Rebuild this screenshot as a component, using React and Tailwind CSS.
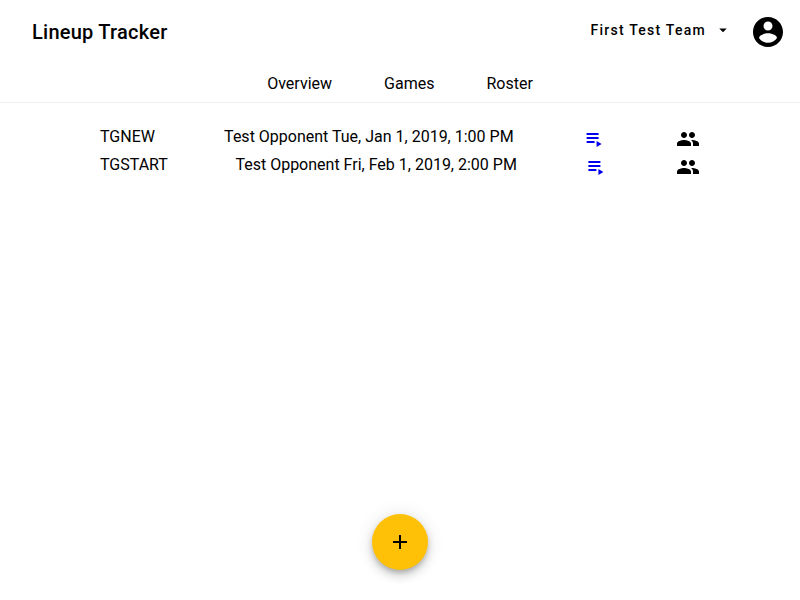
const Icon = ({ d, className, shift = 0 }) => (
  <svg viewBox="0 0 24 24" className={className} fill="currentColor">
    <path d={d} transform={`translate(${shift} 0)`} />
  </svg>
);

const ACCOUNT = "M12 2C6.48 2 2 6.48 2 12s4.48 10 10 10 10-4.48 10-10S17.52 2 12 2zm0 3c1.66 0 3 1.34 3 3s-1.34 3-3 3-3-1.34-3-3 1.34-3 3-3zm0 14.2c-2.5 0-4.71-1.28-6-3.22.03-1.99 4-3.08 6-3.08 1.99 0 5.97 1.09 6 3.08-1.29 1.94-3.5 3.22-6 3.22z";
const PEOPLE = "M16 11c1.66 0 2.99-1.34 2.99-3S17.66 5 16 5c-1.66 0-3 1.34-3 3s1.34 3 3 3zm-8 0c1.66 0 2.99-1.34 2.99-3S9.66 5 8 5C6.34 5 5 6.34 5 8s1.34 3 3 3zm0 2c-2.33 0-7 1.17-7 3.5V19h14v-2.5c0-2.33-4.67-3.5-7-3.5zm8 0c-.29 0-.62.02-.97.05 1.16.84 1.97 1.97 1.97 3.45V19h6v-2.5c0-2.33-4.67-3.5-7-3.5z";
const PLAYLIST = "M4 10h12v2H4zm0-4h12v2H4zm0 8h8v2H4zm10 0v6l5-3z";

const games = [
  { id: "TGNEW", text: "Test Opponent Tue, Jan 1, 2019, 1:00 PM", shift: -0.4 },
  { id: "TGSTART", text: "Test Opponent Fri, Feb 1, 2019, 2:00 PM", shift: 0.4 },
];

export default function App() {
  return (
    <div className="relative h-[600px] w-[800px] overflow-hidden bg-white font-[Roboto,sans-serif] text-base text-black">
      <header className="border-b border-[#eeeeee]">
        <div className="flex h-16 items-center pl-8 pr-3">
          <h1 className="flex-1 text-xl font-medium tracking-[0.25px]">Lineup Tracker</h1>
          <button className="mr-[18px] flex items-center pb-1 text-sm font-medium tracking-[1.25px]">
            First Test Team
            <Icon d="M7 10l5 5 5-5z" className="ml-2 size-[18px]" />
          </button>
          <Icon d={ACCOUNT} className="mr-0.5 size-9" />
        </div>
        <nav className="flex h-[38px] justify-center gap-[52px] pt-2 leading-6">
          <a>Overview</a>
          <a>Games</a>
          <a>Roster</a>
        </nav>
      </header>
      <main className="mx-auto w-[600px] pt-6">
        {games.map((g) => (
          <div key={g.id} className="flex h-7 justify-between leading-5">
            <span>{g.id}</span>
            <span>{g.text}</span>
            <a className="text-[#0000ee]">
              <Icon d={PLAYLIST} shift={g.shift} className="size-6" />
            </a>
            <Icon d={PEOPLE} className="size-6" />
          </div>
        ))}
      </main>
      <button className="absolute bottom-[30px] left-[372px] flex size-14 items-center justify-center rounded-full bg-[#ffc107] shadow-[0_3px_5px_-1px_rgba(0,0,0,0.2),0_6px_10px_0_rgba(0,0,0,0.14),0_1px_18px_0_rgba(0,0,0,0.12)]">
        <Icon d="M19 13h-6v6h-2v-6H5v-2h6V5h2v6h6v2z" className="size-6" />
      </button>
    </div>
  );
}
